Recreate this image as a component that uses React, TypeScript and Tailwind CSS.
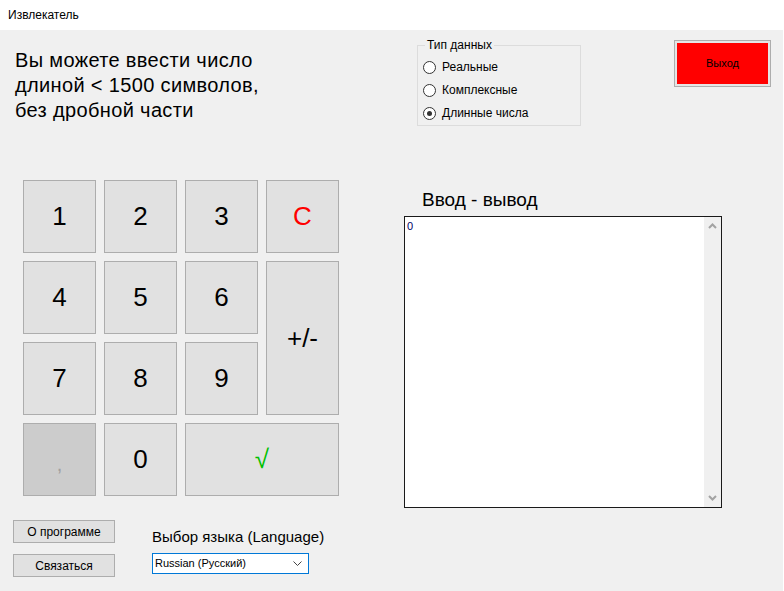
import React from "react";

const btn =
  "flex items-center justify-center border border-[#adadad] bg-[#e1e1e1] text-[26px] text-black";

function Radio({ label, checked }: { label: string; checked?: boolean }) {
  return (
    <div className="flex items-center h-[13px] gap-[6px]">
      <div className="w-[13px] h-[13px] rounded-full border border-[#333] bg-white flex items-center justify-center shrink-0">
        {checked && <div className="w-[5px] h-[5px] rounded-full bg-[#333]" />}
      </div>
      <span className="text-[12px] leading-[13px] text-black">{label}</span>
    </div>
  );
}

export default function App() {
  return (
    <div
      className="w-[784px] h-[591px] bg-white overflow-hidden"
      style={{ fontFamily: '"Liberation Sans", Arial, sans-serif' }}
    >
      <div className="h-[30px] flex items-center pl-[8px] text-[12px] text-black bg-white">
        Извлекатель
      </div>
      <div className="w-[783px] h-[561px] bg-[#f0f0f0] flex flex-col">
        {/* top row */}
        <div className="h-[150px] flex items-start shrink-0">
          <div className="w-[417px] shrink-0 pl-[15px] pt-[18px] text-[20px] tracking-[0.35px] leading-[25px] text-black">
            Вы можете ввести число
            <br />
            длиной &lt; 1500 символов,
            <br />
            без дробной части
          </div>
          <div className="mt-[15px] w-[164px] h-[81px] shrink-0 border border-[#dcdcdc] relative pl-[5px] pt-[15px] flex flex-col gap-[10px]">
            <span className="absolute -top-[8px] left-[7px] px-[2px] bg-[#f0f0f0] text-[12px] leading-[14px] text-black">
              Тип данных
            </span>
            <Radio label="Реальные" />
            <Radio label="Комплексные" />
            <Radio label="Длинные числа" checked />
          </div>
          <div className="ml-[93px] mt-[10px] w-[97px] h-[47px] shrink-0 border border-[#adadad] bg-[#e5e5e5] p-[2px]">
            <div className="w-full h-full bg-[#ff0000] flex items-center justify-center text-[11px] text-black">
              Выход
            </div>
          </div>
        </div>

        {/* middle row */}
        <div className="h-[328px] flex items-start shrink-0">
          <div className="ml-[23px] grid grid-cols-[73px_73px_73px_73px] grid-rows-[73px_73px_73px_73px] gap-[8px]">
            <div className={btn}>1</div>
            <div className={btn}>2</div>
            <div className={btn}>3</div>
            <div className={btn + " !text-[#ff0000]"}>C</div>
            <div className={btn}>4</div>
            <div className={btn}>5</div>
            <div className={btn}>6</div>
            <div className={btn + " row-span-2"}>+/-</div>
            <div className={btn}>7</div>
            <div className={btn}>8</div>
            <div className={btn}>9</div>
            <div className="flex items-center justify-center border border-[#adadad] bg-[#cccccc] text-[20px] text-[#a0a0a0] pt-[8px]">
              ,
            </div>
            <div className={btn}>0</div>
            <div className={btn + " col-span-2 !text-[#00c000]"}>√</div>
          </div>
          <div className="ml-[65px] flex flex-col">
            <div className="h-[36px] pt-[9px] pl-[18px] text-[19px] leading-[22px] text-black">
              Ввод - вывод
            </div>
            <div className="w-[318px] h-[292px] border border-[#1a1a1a] bg-white flex">
              <div className="flex-1 pl-[2px] pt-[3px] text-[11px] leading-[13px] text-[#000066]">
                0
              </div>
              <div className="w-[17px] h-full bg-[#f0f0f0] flex flex-col justify-between items-center py-[6px]">
                <svg width="9" height="6" viewBox="0 0 9 6">
                  <polyline points="1,5 4.5,1.5 8,5" fill="none" stroke="#a3a3a3" strokeWidth="2" />
                </svg>
                <svg width="9" height="6" viewBox="0 0 9 6">
                  <polyline points="1,1 4.5,4.5 8,1" fill="none" stroke="#a3a3a3" strokeWidth="2" />
                </svg>
              </div>
            </div>
          </div>
        </div>

        {/* bottom row */}
        <div className="flex items-start pt-[12px]">
          <div className="ml-[13px] flex flex-col gap-[11px]">
            <div className="w-[102px] h-[23px] border border-[#adadad] bg-[#e1e1e1] flex items-center justify-center text-[12px] text-black">
              О программе
            </div>
            <div className="w-[102px] h-[23px] border border-[#adadad] bg-[#e1e1e1] flex items-center justify-center text-[12px] text-black">
              Связаться
            </div>
          </div>
          <div className="ml-[37px] mt-[8px] flex flex-col">
            <div className="h-[18px] text-[15px] leading-[18px] text-black">
              Выбор языка (Language)
            </div>
            <div className="mt-[7px] w-[157px] h-[21px] border border-[#0078d7] bg-white flex items-center pl-[2px] pr-[6px] text-[11px] text-black">
              <span className="flex-1">Russian (Русский)</span>
              <svg width="9" height="6" viewBox="0 0 9 6">
                <polyline points="0.5,0.5 4.5,4.5 8.5,0.5" fill="none" stroke="#444" strokeWidth="1" />
              </svg>
            </div>
          </div>
        </div>
      </div>
    </div>
  );
}
